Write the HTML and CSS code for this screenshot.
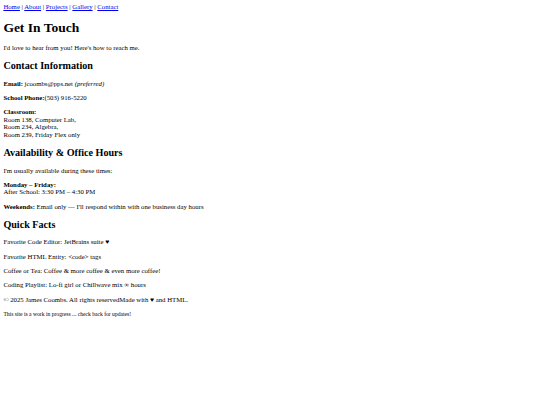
FILE: index.html
```html
<!DOCTYPE html>
<html lang="en">
<head>
    <meta charset="UTF-8">
    <meta name="viewport" content="width=device-width, initial-scale=1.0">
    <title>Contact - James Coombs</title>
    <link rel="stylesheet" href="styles.css">
</head>
<body>
    <!-- Top navigation -->
    <nav class="site-nav">
        <a href="index.html">Home</a> |
        <a href="about.html">About</a> |
        <a href="projects.html">Projects</a> |
        <a href="gallery.html">Gallery</a> |
        <a href="contact.html">Contact</a>
    </nav>

    <main>
        <h1>Get In Touch</h1>
        <p>I'd love to hear from you! Here's how to reach me.</p>

        <section>
            <h2>Contact Information</h2>
            <p><strong>Email:</strong> jcoombs@pps.net <em>(preferred)</em></p>
            <p><strong>School Phone:</strong>(503) 916-5220</p>
            <p><strong>Classroom:</strong><br>
                Room 138, Computer Lab,<br>
                Room 234, Algebra,<br>
                Room 239, Friday Flex only</p>
        </section>

        <section>
            <h2>Availability &amp; Office Hours</h2>
            <p>I'm usually available during these times:</p>
            <p><strong>Monday &ndash; Friday:</strong><br>
                After School: 3:30 PM &ndash; 4:30 PM</p>
            <p><strong>Weekends:</strong> Email only &mdash; I'll respond within with one business day hours</p>
        </section>

        <section>
            <h2>Quick Facts</h2>
            <p>Favorite Code Editor: JetBrains suite &hearts;</p>
            <p>Favorite HTML Entity: &lt;code&gt; tags</p>
            <p>Coffee or Tea: Coffee &amp; more coffee &amp; even more coffee!</p>
            <p>Coding Playlist: Lo-fi girl or Chillwave mix &infin; hours</p>
        </section>
    </main>

    <footer>
        <p>&copy; 2025 James Coombs. All rights reservedMade with &hearts; and HTML.</p>
        <p><small>This site is a work in progress ... check back for updates!</small></p>
    </footer>
</body>
</html>
```
FILE: styles.css
```css
/* Desktop default styles, shrunk to fit the small window */
body {
    margin: 3.375px;
    font-family: "Liberation Serif", "Times New Roman", serif;
    font-size: 6.75px;
    line-height: 1.12;
    color: #000;
    background: #fff;
}

.site-nav a {
    color: #0000ee;
}

h1 {
    font-size: 2em;
}

h2 {
    font-size: 1.5em;
}

small {
    font-size: 0.833em;
}
```
